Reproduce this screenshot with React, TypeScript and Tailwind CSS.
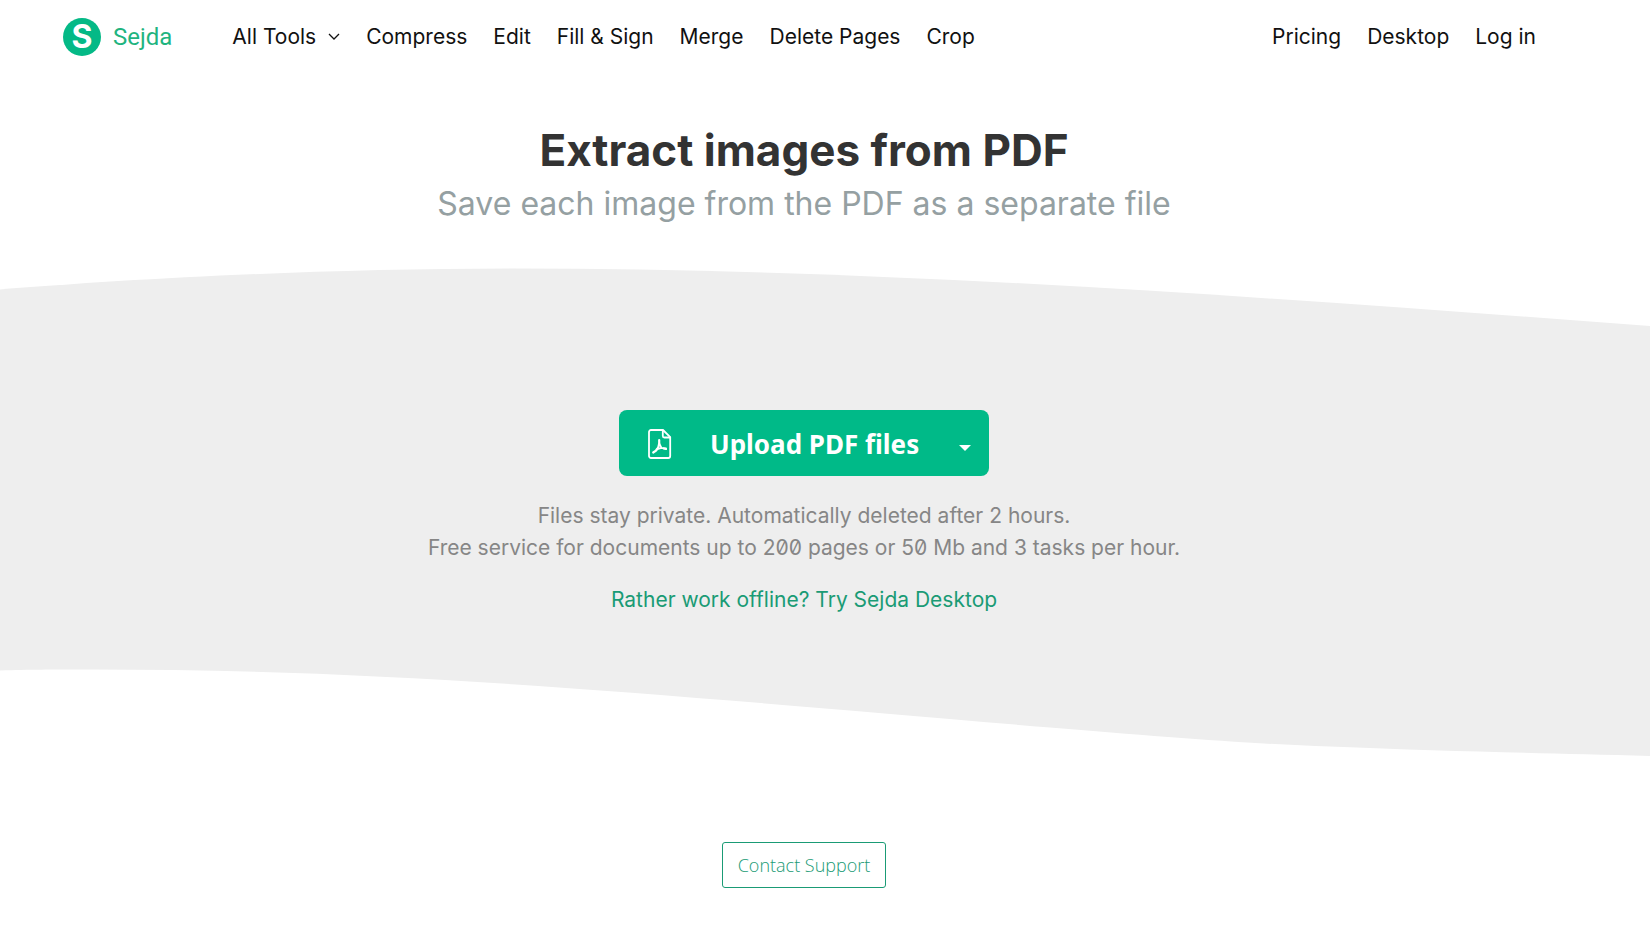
interface NavItem {
    label: string;
    href: string;
}

const toolLinks: NavItem[] = [
    { label: "Compress", href: "#compress" },
    { label: "Edit", href: "#edit" },
    { label: "Fill & Sign", href: "#fill-sign" },
    { label: "Merge", href: "#merge" },
    { label: "Delete Pages", href: "#delete-pages" },
    { label: "Crop", href: "#crop" },
];

const accountLinks: NavItem[] = [
    { label: "Pricing", href: "#pricing" },
    { label: "Desktop", href: "#desktop" },
    { label: "Log in", href: "#login" },
];

function Logo() {
    return (
        <a href="#home" className="flex items-center gap-3 text-[#1fb47f]">
            <span className="flex size-[38px] items-center justify-center rounded-full bg-[#04b986] text-[32px] leading-none font-bold text-white">
                S
            </span>
            <span className="font-['Roboto',sans-serif] text-2xl">Sejda</span>
        </a>
    );
}

function Header() {
    return (
        <header className="flex items-center pt-[18px] pr-[114px] pl-[63px] text-[21px] text-[#111]">
            <Logo />
            <nav className="ml-[60px] flex grow items-center justify-between">
                <div className="flex items-center gap-[26px]">
                    <button type="button" className="flex items-center gap-3">
                        All Tools
                        <svg
                            viewBox="0 0 12 8"
                            fill="none"
                            stroke="currentColor"
                            strokeWidth="1.3"
                            className="h-2 w-3"
                        >
                            <path d="M1 1l5 5 5-5" />
                        </svg>
                    </button>
                    {toolLinks.map((item) => (
                        <a key={item.label} href={item.href}>
                            {item.label}
                        </a>
                    ))}
                </div>
                <div className="flex items-center gap-[26px]">
                    {accountLinks.map((item) => (
                        <a key={item.label} href={item.href}>
                            {item.label}
                        </a>
                    ))}
                </div>
            </nav>
        </header>
    );
}

function PdfIcon() {
    return (
        <svg
            viewBox="0 0 24 30"
            fill="none"
            stroke="currentColor"
            strokeWidth="1.8"
            strokeLinejoin="round"
            strokeLinecap="round"
            className="h-[30px] w-6"
        >
            <path d="M3 1h12l7.200 7.200V27a2 2 0 0 1-2 2H3a2 2 0 0 1-2-2V3a2 2 0 0 1 2-2z" />
            <path d="M14.800 1.300V7a1.500 1.500 0 0 0 1.500 1.500H22" />
            <path d="M11.200 11v3.500l-.8 3.500-2 3.300-3.200 2.200" strokeWidth="2.200" />
            <path d="M11.200 14.500l2.300 4.300-5.100 1.600M13.500 18.800l4.500.7" />
            <path d="M15.500 19.500l2.500.5" strokeWidth="2.200" />
        </svg>
    );
}

function UploadButton() {
    return (
        <div className="flex h-[66px] w-[370px] overflow-hidden rounded-lg bg-[#00ba88] text-white">
            <button
                type="button"
                className="flex grow items-center gap-[38px] pt-0.5 pl-[29px] font-['Noto_Sans',sans-serif] text-[26px] font-bold"
            >
                <PdfIcon />
                Upload PDF files
            </button>
            <button
                type="button"
                aria-label="More upload options"
                className="flex w-12 items-center justify-center pt-2.5"
            >
                <svg viewBox="0 0 12 6" fill="currentColor" className="h-1.5 w-3">
                    <path d="M0 0h12L6 6z" />
                </svg>
            </button>
        </div>
    );
}

export default function App() {
    return (
        <div className="min-h-screen bg-white font-['Inter',sans-serif]">
            <Header />
            <main>
                <div className="pt-[66px] pr-[42px] pb-[38px] text-center">
                    <h1 className="text-[44px] leading-[56px] font-bold text-[#333]">
                        Extract images from PDF
                    </h1>
                    <p className="text-[32px] leading-[52px] text-[#95a0a2]">
                        Save each image from the PDF as a separate file
                    </p>
                </div>

                <svg
                    viewBox="0 268 1650 58"
                    preserveAspectRatio="none"
                    className="block h-[58px] w-full text-[#eee]"
                    fill="currentColor"
                >
                    <path d="M0 289.500C130 279 320 268.500 515 268.500C880 268.500 1250 296 1650 326H0z" />
                </svg>
                <section className="flex flex-col items-center bg-[#eee] pt-[84px] pr-[42px] pb-[53px] text-center text-[21px] leading-8">
                    <UploadButton />
                    <p className="mt-6 text-[#868686] slashed-zero">
                        Files stay private. Automatically deleted after 2 hours.
                        <br />
                        Free service for documents up to 200 pages or 50 Mb and 3 tasks per hour.
                    </p>
                    <a href="#desktop" className="mt-5 text-[#1a9b75]">
                        Rather work offline? Try Sejda Desktop
                    </a>
                </section>
                <svg
                    viewBox="0 669 1650 88"
                    preserveAspectRatio="none"
                    className="block h-[88px] w-full text-[#eee]"
                    fill="currentColor"
                >
                    <path d="M0 669V670.500C30 669.500 50 669.500 90 669.500C400 669.500 640 693 1050 727.500C1160 736.500 1250 744 1330 746.500C1450 751.500 1540 753 1650 756V669z" />
                </svg>
            </main>

            <footer className="flex justify-center pt-[85px] pr-[42px] pb-9">
                <button
                    type="button"
                    className="h-[46px] rounded-[3px] border border-[#1a9b75] px-[15px] font-['Open_Sans',sans-serif] text-lg font-light text-[#1a9b75]"
                >
                    Contact Support
                </button>
            </footer>
        </div>
    );
}
